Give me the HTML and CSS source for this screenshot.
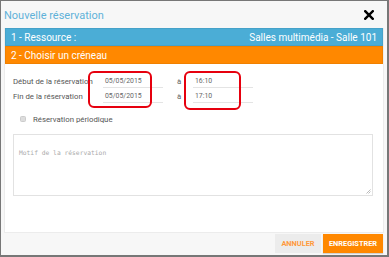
FILE: index.html
```html
<!DOCTYPE html>
<html>
<head>
<meta charset="utf-8">
<link rel="stylesheet" href="styles.css">
</head>
<body>
<div class="modal">
  <div class="head">
    <span class="title">Nouvelle réservation</span>
    <svg class="close" width="10" height="10" viewBox="0 0 10 10"><path d="M1.2 1.2 L8.8 8.8 M8.8 1.2 L1.2 8.8" stroke="#000" stroke-width="2.4" stroke-linecap="square"/></svg>
  </div>
  <div class="panel">
    <div class="bar blue"><span>1 - Ressource :</span><span>Salles multimédia - Salle 101</span></div>
    <div class="bar orange"><span>2 - Choisir un créneau</span></div>
    <div class="form">
      <div class="dates">
        <span class="lbl">Début de la réservation</span>
        <span class="field">05/05/2015</span>
        <span class="a">à</span>
        <span class="field">16:10</span>
        <span class="lbl">Fin de la réservation</span>
        <span class="field">05/05/2015</span>
        <span class="a">à</span>
        <span class="field">17:10</span>
        <span class="mark mark-date"></span>
        <span class="mark mark-time"></span>
      </div>
      <label class="check"><span class="box"></span>Réservation périodique</label>
      <div class="textarea">
        <span class="ph">Motif de la réservation</span>
        <svg class="grip" width="5" height="5" viewBox="0 0 5 5"><path d="M4.5 0.5 L0.5 4.5 M4.5 2.5 L2.5 4.5" stroke="#aaa" stroke-width="0.8"/></svg>
      </div>
    </div>
  </div>
  <div class="foot">
    <span class="btn cancel">ANNULER</span>
    <span class="btn save">ENREGISTRER</span>
  </div>
</div>
</body>
</html>
```
FILE: styles.css
```css
* { box-sizing: border-box; }
html, body { margin: 0; padding: 0; }
body { width: 389px; height: 257px; overflow: hidden; font-family: Roboto, "Liberation Sans", sans-serif; }
.modal {
  width: 389px; height: 257px;
  border-style: solid; border-color: #777;
  border-width: 1px 2px 2px 1px;
  background: #f7f7f7;
  display: flex; flex-direction: column;
}
.head {
  height: 27px;
  display: flex; align-items: center; justify-content: space-between;
  padding: 1px 13px 0 3px;
}
.title { font-size: 11px; color: #5fb2d9; }
.close { display: block; }
.panel {
  margin: 0 3px;
  background: #fff;
  height: 205px;
  border: 1px solid #ececec;
  border-top: none;
  display: flex; flex-direction: column;
}
.bar {
  height: 18px;
  display: flex; align-items: center; justify-content: space-between;
  padding: 0 5px;
  font-size: 10px; color: #fff;
  border: 1px solid rgba(0,0,0,0.06);
}
.blue { background: #4badd6; }
.orange { background: #ff8800; }
.form { padding: 9px 0 0 8px; display: flex; flex-direction: column; }
.dates {
  position: relative;
  display: grid;
  grid-template-columns: 90px 60px 30px 60px;
  grid-auto-rows: 15px;
  font-size: 7.8px; color: #555;
  width: 240px;
}
.lbl { display: flex; align-items: center; padding-top: 1px; color: #555; }
.field { display: flex; align-items: center; padding: 1px 0 0 2px; border-bottom: 1px solid #e4e4e4; color: #666; font-size: 6.9px; }
.a { display: flex; align-items: center; padding: 1px 0 0 14px; color: #666; }
.mark {
  position: absolute;
  border: 2px solid #e6000e;
  border-radius: 6px;
}
.mark-date { left: 75px; top: -2px; width: 64px; height: 37px; }
.mark-time { left: 171px; top: -2px; width: 57px; height: 39px; }
.check {
  display: flex; align-items: center;
  margin: 11px 0 0 7px;
  height: 10px;
  font-size: 7.8px; color: #555;
}
.box {
  width: 6px; height: 6px; border-radius: 1.5px;
  background: #ddd; border: 1px solid #ccc;
  margin-right: 7px;
}
.textarea {
  position: relative;
  margin-top: 10px;
  width: 360px; height: 62px;
  border: 1px solid #e2e2e2;
  padding: 5px 0 0 5px;
}
.ph { font-family: "DejaVu Sans Mono", "Liberation Mono", monospace; font-size: 6.3px; color: #aaa; }
.grip { position: absolute; right: 1px; bottom: 1px; }
.foot {
  flex: 1;
  display: flex; justify-content: flex-end; align-items: flex-start;
  padding: 1px 4px 0 0;
  gap: 2px;
}
.btn {
  height: 19px;
  display: flex; align-items: center; justify-content: center;
  font-size: 7.4px; font-weight: 700;
}
.cancel { width: 46px; background: #ececec; color: #ff9a3c; }
.save { width: 60px; background: #ff8800; color: #fff; box-shadow: 0 1px 1px rgba(0,0,0,0.15); }
```
